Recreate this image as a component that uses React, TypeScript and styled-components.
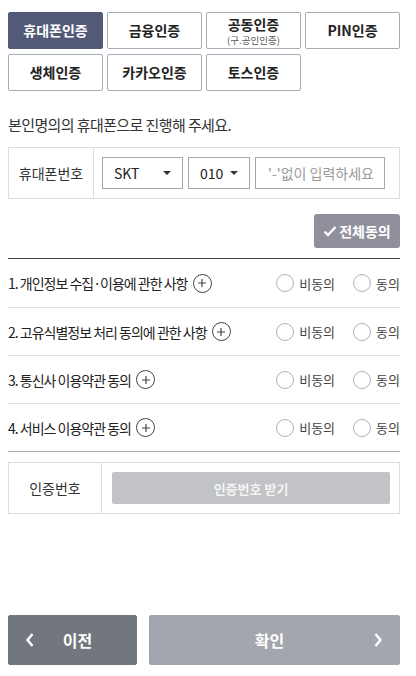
import React from "react";
import styled, { createGlobalStyle } from "styled-components";

const Global = createGlobalStyle`
  html, body { margin: 0; padding: 0; background: #fff; }
  body { font-family: "Noto Sans CJK KR", "Noto Sans", sans-serif; color: #333; }
  * { box-sizing: border-box; }
`;

const Page = styled.div`
  display: flex;
  flex-direction: column;
  min-height: 676px;
  padding: 12px 16px 11px 8px;
`;

const TabGrid = styled.div`
  display: grid;
  grid-template-columns: repeat(4, 1fr);
  column-gap: 4px;
  row-gap: 5px;
`;

const Tab = styled.button<{ $active?: boolean }>`
  height: 37px;
  border-radius: 2px;
  border: 1px solid ${(p) => (p.$active ? "#525a78" : "#a7abb3")};
  background: ${(p) => (p.$active ? "#525a78" : "#fff")};
  color: ${(p) => (p.$active ? "#fff" : "#222")};
  font-family: inherit;
  font-size: 14px;
  font-weight: 700;
  display: flex;
  flex-direction: column;
  align-items: center;
  justify-content: center;
  line-height: 17px;
  padding: 0;
`;

const TabSub = styled.span`
  font-size: 9.5px;
  font-weight: 400;
  color: #555;
  line-height: 12px;
  margin-top: 1px;
`;

const Notice = styled.p`
  margin: 24px 0 0;
  font-size: 15px;
  line-height: 20px;
  color: #333;
  letter-spacing: -0.6px;
`;

const FormBox = styled.div<{ $top: number }>`
  margin-top: ${(p) => p.$top}px;
  height: 52px;
  border: 1px solid #dcdde1;
  display: flex;
`;

const FormLabel = styled.div<{ $w: number }>`
  width: ${(p) => p.$w}px;
  flex: none;
  border-right: 1px solid #dcdde1;
  display: flex;
  align-items: center;
  justify-content: center;
  font-size: 14px;
  color: #333;
`;

const FormBody = styled.div<{ $pl: number; $pr: number }>`
  flex: 1;
  min-width: 0;
  display: flex;
  align-items: center;
  gap: 5px;
  padding: 0 ${(p) => p.$pr}px 0 ${(p) => p.$pl}px;
`;

const Select = styled.div<{ $w: number }>`
  width: ${(p) => p.$w}px;
  flex: none;
  height: 32px;
  border: 1px solid #a3a7ae;
  display: flex;
  align-items: center;
  justify-content: space-between;
  padding: 0 11px 0 11px;
  font-size: 14px;
  color: #222;
`;

const Caret = styled.span`
  width: 0;
  height: 0;
  border-left: 4px solid transparent;
  border-right: 4px solid transparent;
  border-top: 4px solid #333;
`;

const Input = styled.input`
  width: 130px;
  flex: none;
  height: 32px;
  border: 1px solid #a3a7ae;
  font-family: inherit;
  font-size: 14px;
  padding: 0 0 0 12px;
  outline: none;
  &::placeholder { color: #9a9a9a; }
`;

const AgreeAllRow = styled.div`
  display: flex;
  justify-content: flex-end;
  margin-top: 15px;
`;

const AgreeAllBtn = styled.button`
  width: 86px;
  height: 34px;
  border: none;
  border-radius: 3px;
  background: #8f909c;
  color: #fff;
  font-family: inherit;
  font-size: 14px;
  font-weight: 700;
  display: flex;
  align-items: center;
  justify-content: center;
  gap: 2px;
  padding: 0;
`;

const TermsList = styled.div`
  margin-top: 10px;
  border-top: 1px solid #3f4352;
  border-bottom: 1px solid #a8adb4;
`;

const TermRow = styled.div`
  height: 48px;
  display: flex;
  align-items: center;
  & + & { border-top: 1px solid #dfe1e5; }
`;

const TermTitle = styled.div`
  flex: 1;
  display: flex;
  align-items: center;
  gap: 5px;
  font-size: 14px;
  color: #222;
  letter-spacing: -1px;
`;

const PlusIcon = styled.span`
  width: 19px;
  height: 19px;
  border-radius: 50%;
  border: 1px solid #444;
  display: inline-flex;
  align-items: center;
  justify-content: center;
  flex: none;
`;

const Radio = styled.label<{ $ml: number }>`
  display: flex;
  align-items: center;
  gap: 5px;
  margin-left: ${(p) => p.$ml}px;
  font-size: 13px;
  color: #444;
`;

const RadioCircle = styled.span`
  width: 18px;
  height: 18px;
  border-radius: 50%;
  border: 1px solid #aeb2ba;
  background: #fff;
`;

const VerifyBtn = styled.button`
  flex: 1;
  height: 32px;
  border: none;
  border-radius: 2px;
  background: #c1c3c6;
  color: #f4f4f4;
  font-family: inherit;
  font-size: 13px;
  font-weight: 700;
`;

const Footer = styled.div`
  margin-top: auto;
  display: flex;
  gap: 12px;
`;

const NavBtn = styled.button<{ $bg: string; $w?: number }>`
  ${(p) => (p.$w ? `width: ${p.$w}px; flex: none;` : "flex: 1;")}
  height: 50px;
  border: 1px solid ${(p) => p.$bg};
  border-radius: 2px;
  background: ${(p) => p.$bg};
  color: #fff;
  font-family: inherit;
  font-size: 16px;
  font-weight: 700;
  display: flex;
  align-items: center;
  padding: 0 16px;
`;

const NavLabel = styled.span`
  flex: 1;
  text-align: center;
`;

const Chevron = ({ dir }: { dir: "l" | "r" }) => (
  <svg width="10" height="16" viewBox="0 0 10 16">
    <path
      d={dir === "l" ? "M7.5 2 L2.5 8 L7.5 14" : "M2.5 2 L7.5 8 L2.5 14"}
      fill="none"
      stroke="#fff"
      strokeWidth="2.4"
    />
  </svg>
);

const terms = [
  "1. 개인정보 수집·이용에 관한 사항",
  "2. 고유식별정보 처리 동의에 관한 사항",
  "3. 통신사 이용약관 동의",
  "4. 서비스 이용약관 동의",
];

export default function App() {
  return (
    <>
      <Global />
      <Page>
        <TabGrid>
          <Tab $active>휴대폰인증</Tab>
          <Tab>금융인증</Tab>
          <Tab>
            공동인증
            <TabSub>(구.공인인증)</TabSub>
          </Tab>
          <Tab>PIN인증</Tab>
          <Tab>생체인증</Tab>
          <Tab>카카오인증</Tab>
          <Tab>토스인증</Tab>
        </TabGrid>

        <Notice>본인명의의 휴대폰으로 진행해 주세요.</Notice>

        <FormBox $top={12}>
          <FormLabel $w={85}>휴대폰번호</FormLabel>
          <FormBody $pl={8} $pr={14}>
            <Select $w={81}>
              SKT
              <Caret />
            </Select>
            <Select $w={62}>
              010
              <Caret />
            </Select>
            <Input placeholder="'-'없이 입력하세요" />
          </FormBody>
        </FormBox>

        <AgreeAllRow>
          <AgreeAllBtn>
            <svg width="14" height="12" viewBox="0 0 14 12">
              <path d="M1.5 6.5 L5 10 L12.5 2" fill="none" stroke="#fff" strokeWidth="2.4" />
            </svg>
            전체동의
          </AgreeAllBtn>
        </AgreeAllRow>

        <TermsList>
          {terms.map((t) => (
            <TermRow key={t}>
              <TermTitle>
                {t}
                <PlusIcon>
                  <svg width="10" height="10" viewBox="0 0 10 10">
                    <path d="M5 1 V9 M1 5 H9" stroke="#444" strokeWidth="1.2" />
                  </svg>
                </PlusIcon>
              </TermTitle>
              <Radio $ml={0}>
                <RadioCircle />
                비동의
              </Radio>
              <Radio $ml={18}>
                <RadioCircle />
                동의
              </Radio>
            </TermRow>
          ))}
        </TermsList>

        <FormBox $top={10}>
          <FormLabel $w={93}>인증번호</FormLabel>
          <FormBody $pl={10} $pr={9}>
            <VerifyBtn>인증번호 받기</VerifyBtn>
          </FormBody>
        </FormBox>

        <Footer>
          <NavBtn $bg="#72767e" $w={129}>
            <Chevron dir="l" />
            <NavLabel>이전</NavLabel>
          </NavBtn>
          <NavBtn $bg="#a3a5af">
            <NavLabel>확인</NavLabel>
            <Chevron dir="r" />
          </NavBtn>
        </Footer>
      </Page>
    </>
  );
}
